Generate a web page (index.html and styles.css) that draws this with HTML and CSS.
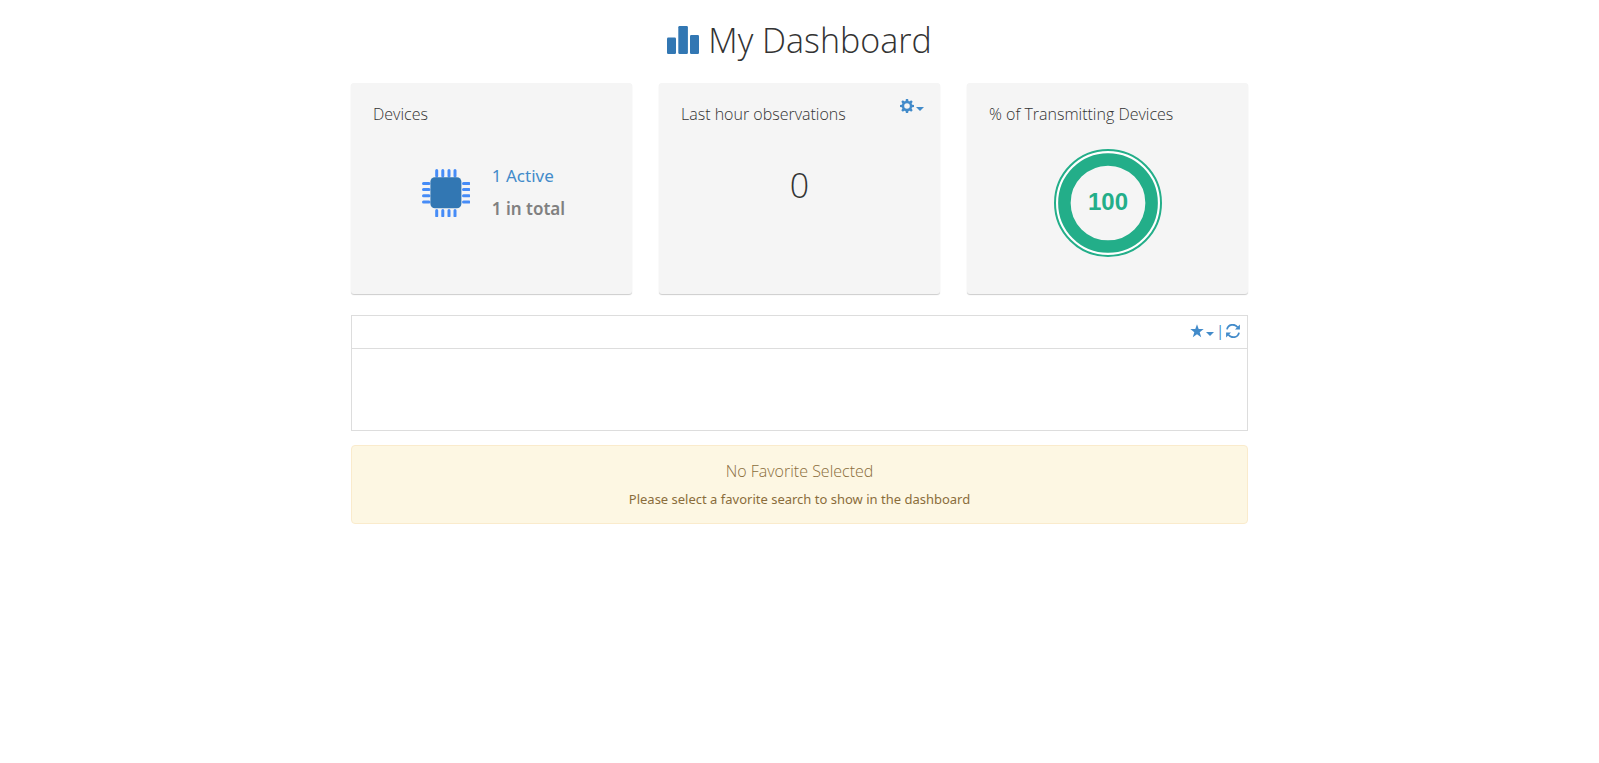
FILE: index.html
```html
<!DOCTYPE html>
<html lang="en">
<head>
<meta charset="utf-8">
<title>My Dashboard</title>
<link rel="stylesheet" href="styles.css">
</head>
<body>
<main class="dashboard">
  <h1 class="title">
    <svg class="title-icon" width="32" height="28" viewBox="0 0 32 28" aria-hidden="true"><rect x="0" y="11.5" width="9" height="16.5" rx="1.2"/><rect x="11.3" y="0" width="9.6" height="28" rx="1.2"/><rect x="23" y="9" width="9" height="19" rx="1.2"/></svg>
    <span>My Dashboard</span>
  </h1>

  <div class="cards">
    <section class="card">
      <h2 class="card-title">Devices</h2>
      <div class="devices">
        <svg width="48" height="48" viewBox="0 0 48 48" aria-hidden="true">
          <path class="pins" d="M14.7 1.5V7M20.8 1.5V7M27 1.5V7M33 1.5V7M14.7 41.5V47M20.8 41.5V47M27 41.5V47M33 41.5V47M1.5 14.5H7M1.5 20.6H7M1.5 26.8H7M1.5 33H7M41.5 14.5H47M41.5 20.6H47M41.5 26.8H47M41.5 33H47"/>
          <rect class="die" x="8.4" y="8.2" width="31" height="31" rx="4.5"/>
        </svg>
        <div class="counts">
          <a class="link" href="#">1 Active</a>
          <strong class="total">1 in total</strong>
        </div>
      </div>
    </section>

    <section class="card">
      <h2 class="card-title">Last hour observations</h2>
      <button class="tool card-menu" type="button" aria-label="Settings">
        <svg width="14" height="14" viewBox="0 0 14 14" aria-hidden="true"><g><path id="t" d="M5.9 0h2.200l.5 3H5.400zM5.400 11h3.200l-.5 3H5.900z"/><use href="#t" transform="rotate(45 7 7)"/><use href="#t" transform="rotate(90 7 7)"/><use href="#t" transform="rotate(135 7 7)"/></g><circle class="ring" cx="7" cy="7" r="4"/></svg>
        <span class="caret"></span>
      </button>
      <p class="value">0</p>
    </section>

    <section class="card">
      <h2 class="card-title">% of Transmitting Devices</h2>
      <svg class="gauge" width="108" height="108" viewBox="0 0 108 108" role="img" aria-label="100 percent">
        <circle class="gauge-gap" cx="54" cy="54" r="51.5"/>
        <circle class="gauge-edge" cx="54" cy="54" r="53"/>
        <circle class="gauge-band" cx="54" cy="54" r="43.6"/>
        <text class="gauge-text" x="54" y="61" text-anchor="middle">100</text>
      </svg>
    </section>
  </div>

  <section class="panel">
    <div class="panel-bar">
      <button class="tool" type="button" aria-label="Favorites">
        <svg width="14" height="14" viewBox="0 0 14 14" aria-hidden="true"><path d="M7 .3l1.7 4.8h5L9.7 8.2l1.5 5L7 10.2l-4.2 3 1.5-5L.3 5.1h5z"/></svg>
        <span class="caret"></span>
      </button>
      <span class="divider">|</span>
      <button class="tool" type="button" aria-label="Refresh">
        <svg width="14" height="14" viewBox="0 0 14 14" aria-hidden="true"><path class="arc" d="M1 5.400C2.200 0 8.500-.6 11.600 3.200M13 8.600C11.800 14 5.500 14.600 2.400 10.800"/><path d="M13.900.6V5.400H9zM.1 13.400V8.600H5z"/></svg>
      </button>
    </div>
    <div class="panel-body"></div>
  </section>

  <section class="alert" role="status">
    <h2 class="alert-title">No Favorite Selected</h2>
    <p class="alert-text">Please select a favorite search to show in the dashboard</p>
  </section>
</main>
</body>
</html>
```
FILE: styles.css
```css
* { box-sizing: border-box; }
body {
  margin: 0;
  background: #fff;
  color: #333;
  font-family: "Noto Sans", "Open Sans", sans-serif;
  font-size: 14px;
  line-height: 20px;
}
h1, h2, p { margin: 0; font-weight: 300; }
.dashboard {
  max-width: 897px;
  margin: 0 auto;
  padding-top: 20px;
}
.title {
  display: flex;
  justify-content: center;
  align-items: center;
  gap: 9px;
  font-family: "Open Sans", sans-serif;
  font-size: 34px;
  line-height: 40px;
}
.title-icon { fill: #3277b3; }
.cards {
  display: grid;
  grid-template-columns: repeat(3, 1fr);
  gap: 27px;
  margin-top: 23px;
}
.card {
  position: relative;
  min-height: 211px;
  padding: 20px 22px;
  border-radius: 3px;
  background: #f5f5f5;
  box-shadow: 0 1px 1px rgba(0, 0, 0, .2);
}
.card-title, .alert-title {
  font-family: "Open Sans", sans-serif;
  font-size: 16px;
  line-height: 22px;
}
.devices {
  display: flex;
  justify-content: center;
  gap: 22px;
  margin-top: 39px;
  padding-left: 4px;
}
.devices svg { margin-top: 5px; }
.pins { stroke: #468cf7; stroke-width: 3; stroke-linecap: round; }
.die { fill: #3277b3; }
.counts {
  display: flex;
  flex-direction: column;
  gap: 9px;
  font-size: 17px;
  line-height: 24px;
}
.link { color: #428bca; text-decoration: none; }
.total { color: #808080; font-weight: 600; }
.value {
  margin-top: 40px;
  font-family: "Open Sans", sans-serif;
  font-size: 34px;
  line-height: 40px;
  text-align: center;
}
.tool {
  display: inline-flex;
  align-items: center;
  gap: 2px;
  padding: 0;
  border: 0;
  background: none;
  color: #428bca;
  cursor: pointer;
}
.tool svg { fill: currentColor; }
.tool .ring, .tool .arc { fill: none; stroke: currentColor; }
.tool .ring { stroke-width: 2.4; }
.tool .arc { stroke-width: 1.8; }
.caret {
  margin-top: 5px;
  border: 4px solid transparent;
  border-top-color: currentColor;
  border-bottom: 0;
}
.card-menu { position: absolute; top: 16px; right: 16px; }
.gauge { display: block; margin: 24px auto 0; }
.gauge circle { fill: none; }
.gauge-gap { stroke: #fff; stroke-width: 3; }
.gauge-edge { stroke: #23ae89; stroke-width: 2; }
.gauge-band { stroke: #23ae89; stroke-width: 12.5; }
.gauge-text {
  fill: #23ae89;
  font: bold 24px "Liberation Sans", Arial, sans-serif;
}
.panel { margin-top: 21px; border: 1px solid #ddd; }
.panel-bar {
  display: flex;
  justify-content: flex-end;
  align-items: center;
  gap: 2px;
  height: 33px;
  padding: 0 7px 2px;
  border-bottom: 1px solid #ddd;
}
.divider { color: #428bca; }
.panel-body { min-height: 81px; }
.alert {
  margin-top: 14px;
  padding: 14px 15px;
  border: 1px solid #faebcc;
  border-radius: 4px;
  background: #fdf7e3;
  color: #8a6d3b;
  text-align: center;
}
.alert-text { margin-top: 7px; font-size: 13px; font-weight: 400; }
```
